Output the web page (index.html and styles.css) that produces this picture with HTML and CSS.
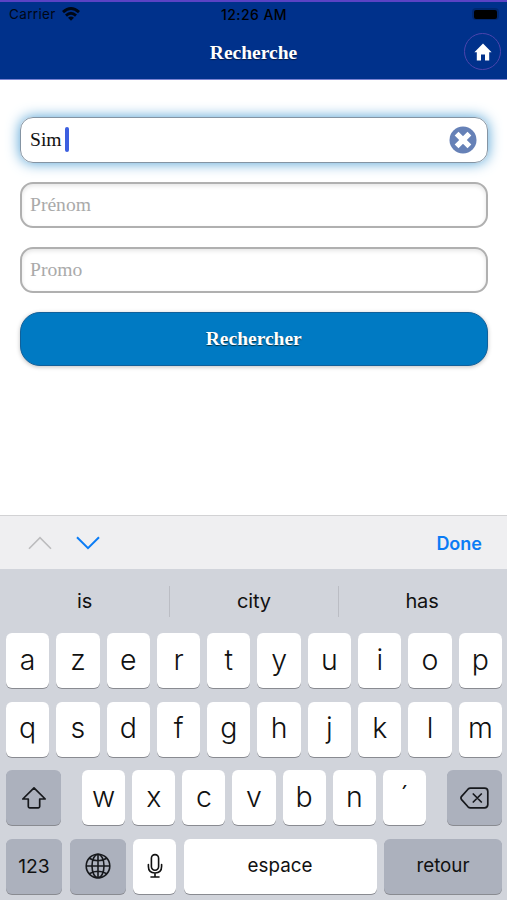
FILE: index.html
```html
<!DOCTYPE html>
<html lang="fr">
<head>
<meta charset="utf-8">
<title>Recherche</title>
<link rel="stylesheet" href="styles.css">
</head>
<body>
<div class="phone">
  <header class="header">
    <div class="status">
      <span class="carrier">Carrier
        <svg class="wifi" width="18" height="14" viewBox="0 0 18 14" fill="none" stroke="#000" stroke-width="2.9"><path d="M1 5.2Q9-2 17 5.2M4 8.6Q9 4 14 8.6"/><path d="M6 10.7Q9 8.2 12 10.7L9 13.8z" fill="#000" stroke="none"/></svg>
      </span>
      <span class="clock">12:26 AM</span>
      <span class="battery"><i></i></span>
    </div>
    <div class="titlebar">
      <h1>Recherche</h1>
      <a class="home"><svg width="18" height="18" viewBox="0 0 18 18"><path d="M9 .6 17.6 9.2H15.2V17.4H11V11.4H7V17.4H2.8V9.2H.4z" fill="#fff"/></svg></a>
    </div>
  </header>
  <main class="form">
    <div class="field focus"><span>Sim</span><i class="caret"></i>
      <svg class="clear" width="28" height="28" viewBox="0 0 28 28"><circle cx="14" cy="14" r="13.5" fill="#6681b7"/><path d="M7.6 7.6 20.4 20.4M20.4 7.6 7.6 20.4" stroke="#fff" stroke-width="5.4"/></svg>
    </div>
    <div class="field"><span>Prénom</span></div>
    <div class="field"><span>Promo</span></div>
    <div class="submit">Rechercher</div>
  </main>
  <div class="accessory">
    <svg width="24" height="14" viewBox="0 0 24 14" fill="none" stroke="#bcbcbe" stroke-width="1.6"><path d="M1 12.8 12 1.6 23 12.8"/></svg>
    <svg class="next" width="24" height="14" viewBox="0 0 24 14" fill="none" stroke="#0b7cf5" stroke-width="2"><path d="M1 1.2 12 12.2 23 1.2"/></svg>
    <span class="done">Done</span>
  </div>
  <section class="keyboard">
    <div class="suggestions"><span>is</span><span>city</span><span>has</span></div>
    <div class="row"><b>a</b><b>z</b><b>e</b><b>r</b><b>t</b><b>y</b><b>u</b><b>i</b><b>o</b><b>p</b></div>
    <div class="row"><b>q</b><b>s</b><b>d</b><b>f</b><b>g</b><b>h</b><b>j</b><b>k</b><b>l</b><b>m</b></div>
    <div class="row third">
      <b class="grey"><svg width="26" height="24" viewBox="0 0 26 24" fill="none" stroke="#16181c" stroke-width="1.7" stroke-linejoin="round"><path d="M13 1.8 24.2 13H18.7V20.5Q18.7 21.8 17.4 21.8H8.6Q7.3 21.8 7.3 20.5V13H1.8z"/></svg></b>
      <div class="letters"><b>w</b><b>x</b><b>c</b><b>v</b><b>b</b><b>n</b><b>´</b></div>
      <b class="grey"><svg width="29" height="22" viewBox="0 0 29 22" fill="none" stroke="#16181c" stroke-width="1.7" stroke-linejoin="round" stroke-linecap="round"><path d="M10.5 1.2H24.5Q27.8 1.2 27.8 4.5V17.5Q27.8 20.8 24.5 20.8H10.5Q9 20.8 8 19.8L1.6 12.6Q.3 11 1.6 9.4L8 2.2Q9 1.2 10.5 1.2zM13.3 7 21.3 15M21.3 7 13.3 15"/></svg></b>
    </div>
    <div class="row fourth">
      <b class="grey word num">123</b>
      <b class="grey"><svg width="26" height="26" viewBox="0 0 26 26" fill="none" stroke="#16181c" stroke-width="1.6"><circle cx="13" cy="13" r="11.8"/><ellipse cx="13" cy="13" rx="6" ry="11.8"/><path d="M13 1.2V24.8M1.2 13H24.8M4.2 5.2Q13 10.4 21.8 5.2M4.2 20.8Q13 15.6 21.8 20.8"/></svg></b>
      <b><svg width="16" height="26" viewBox="0 0 16 26" fill="none" stroke="#111" stroke-width="1.6" stroke-linecap="round"><rect x="4.4" y="1.6" width="7.2" height="15.6" rx="3.6"/><path d="M1.4 11.5V13.6Q1.4 20 8 20T14.6 13.6V11.5M8 20V24M4 24H12"/></svg></b>
      <b class="word">espace</b>
      <b class="grey word">retour</b>
    </div>
  </section>
</div>
</body>
</html>
```
FILE: styles.css
```css
* { box-sizing: border-box; }
body { margin: 0; background: #fff; }
.phone { width: 507px; height: 900px; display: flex; flex-direction: column; overflow: hidden; font-family: Inter, "Liberation Sans", sans-serif; }
svg { display: block; flex: none; }

.header { height: 80px; background: #00318b; border-top: 2px solid #5b43c4; border-bottom: 1px solid #7b83d2; color: #000; }
.status { height: 23px; display: grid; grid-template-columns: 1fr auto 1fr; align-items: center; padding: 1px 8px 0 9px; font-size: 13.5px; }
.carrier { display: flex; align-items: center; gap: 6px; opacity: .85; letter-spacing: .35px; }
.clock { font-weight: 500; font-size: 14px; letter-spacing: .45px; }
.battery { justify-self: end; width: 27px; height: 12px; padding: 1.5px 2px; border-radius: 4px; background: rgba(0, 0, 0, .2); }
.battery i { display: block; height: 9px; background: #000; border-radius: 2px; }
.titlebar { height: 54px; display: grid; grid-template-columns: 1fr auto 1fr; align-items: center; padding-right: 6px; }
.titlebar h1 { grid-column: 2; margin: 2px 0 0 6px; color: #fff; font: bold 19.5px "Liberation Serif", serif; text-shadow: 0 1px 1px rgba(0, 0, 0, .5); }
.home { justify-self: end; width: 37px; height: 37px; margin-top: -1px; border: 1px solid #4c44ad; border-radius: 50%; display: flex; align-items: center; justify-content: center; }

.form { flex: 1; padding: 37px 19.5px 0 20px; display: flex; flex-direction: column; gap: 19px; font-family: "Liberation Serif", serif; }
.field { height: 46px; border: 2px solid #b0b0b0; border-radius: 13px; display: flex; align-items: center; padding: 0 10px 1px 8px; font-size: 19.6px; color: #aaa; box-shadow: inset 0 2px 4px rgba(0, 0, 0, .1); }
.field.focus { border: 1.5px solid #8494a3; padding-left: 9px; color: #111; box-shadow: 0 0 14px #4d9ed3; }
.caret { width: 4px; height: 25px; margin: 0 0 1px 3px; border-radius: 2px; background: #3c5fe0; }
.clear { margin-left: auto; }
.submit { height: 54px; border: 1px solid #11609a; border-radius: 20px; background: #007ac3; color: #fff; font-size: 19.5px; font-weight: bold; display: flex; align-items: center; justify-content: center; text-shadow: 0 1px 1px #034; box-shadow: 0 1px 4px rgba(0, 0, 0, .25); }

.accessory { height: 54px; background: #efeff1; border-top: 1px solid #d2d2d4; display: flex; align-items: center; padding: 0 25px 0 28px; }
.next { margin-left: 24px; }
.done { margin: 1px 0 0 auto; color: #0b7cf5; font-size: 18px; font-weight: 600; }

.keyboard { height: 331px; background: #d1d4db; padding: 0 5px 0 6px; color: #111; }
.suggestions { height: 64px; margin: 0 -3px 0 -6px; display: grid; grid-template-columns: 169px 169px 1fr; align-items: center; text-align: center; font-size: 20px; letter-spacing: -.15px; }
.suggestions span { line-height: 31px; }
.suggestions span + span { border-left: 1px solid #bbbdc4; }
.row { height: 55px; margin-bottom: 13.5px; display: grid; grid-template-columns: repeat(10, 1fr); gap: 7px; }
.row b { height: 55px; padding-bottom: 3px; border-radius: 6px; background: #fff; box-shadow: 0 1px 0 #898b91; display: flex; align-items: center; justify-content: center; font-size: 28.5px; font-weight: 350; }
.row b:has(svg) { padding-bottom: 0; }
.row b.grey { background: #acb1bd; }
.third { grid-template-columns: 55px 344px 55px; justify-content: space-between; gap: 0; }
.letters { display: grid; grid-template-columns: repeat(7, 1fr); gap: 7px; }
.fourth { grid-template-columns: 56px 56px 43px 193px 118px; gap: 0; justify-content: space-between; margin-bottom: 0; }
.row b.word { font-size: 18.8px; font-weight: 400; padding-bottom: 2px; }
.row b.num { font-size: 19.3px; padding-bottom: 0; }
```
